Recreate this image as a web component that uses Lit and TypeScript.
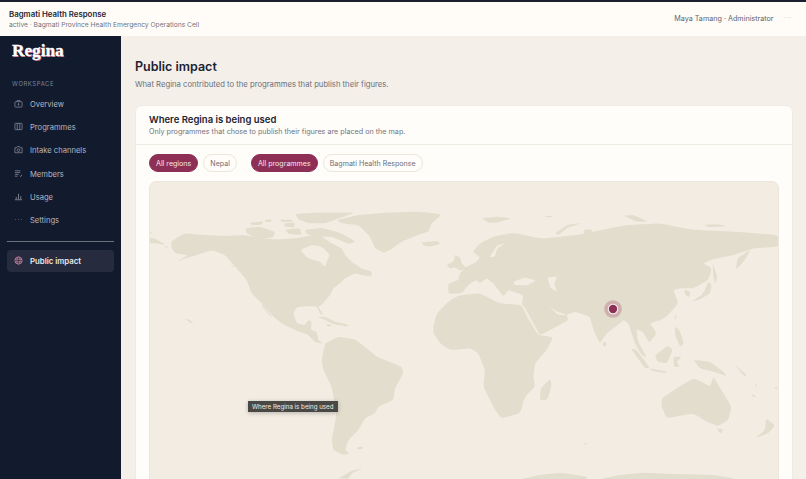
import { LitElement, html, css, svg } from "lit";
import { customElement } from "lit/decorators.js";

const LAND_LEFT = [
  "M78,185 L100,170 L120,160 L180,165 L250,168 L300,165 L350,175 L400,178 L450,175 L505,165 L530,170 L560,190 L590,205 L600,225 L625,250 L650,265 L680,288 L650,285 L630,280 L600,295 L585,310 L565,325 L555,345 L530,375 L520,380 L535,405 L525,400 L515,380 L490,378 L455,382 L445,400 L455,430 L480,435 L490,420 L500,425 L498,450 L515,455 L520,480 L535,490 L510,487 L490,465 L450,450 L410,430 L385,410 L350,370 L320,340 L305,300 L270,260 L240,225 L200,210 L155,225 L120,235 L95,245 L130,225 L90,220 L80,205 Z",
  "M350,370 L382,412 L375,408 L352,380 Z",
  "M575,120 L640,105 L720,98 L830,95 L890,103 L860,130 L850,155 L820,165 L770,185 L735,210 L715,218 L690,205 L675,170 L640,135 L590,130 Z",
  "M830,187 L880,183 L885,192 L855,200 L835,196 Z",
  "M300,145 L345,140 L390,155 L385,172 L340,178 L305,160 Z",
  "M315,128 L355,124 L350,134 L320,136 Z",
  "M360,120 L380,118 L378,126 L362,126 Z",
  "M405,118 L445,120 L440,126 L410,126 Z",
  "M415,130 L450,128 L448,142 L420,140 Z",
  "M420,148 L465,145 L470,165 L430,162 Z",
  "M450,102 L520,97 L630,98 L590,112 L540,130 L490,130 L460,118 Z",
  "M480,150 L530,143 L590,160 L632,185 L610,192 L560,170 L510,170 L485,162 Z",
  "M500,195 L530,195 L525,205 L505,205 Z",
  "M515,410 L540,410 L570,425 L605,433 L610,438 L570,434 L540,420 Z",
  "M545,432 L560,434 L556,440 L546,438 Z",
  "M590,432 L612,436 L600,440 Z",
  "M540,490 L580,470 L630,478 L665,505 L695,530 L770,560 L775,580 L750,625 L745,660 L700,680 L690,700 L660,715 L640,750 L610,780 L600,810 L615,820 L595,825 L565,810 L560,780 L575,700 L560,620 L535,570 L530,540 Z",
  "M635,802 L655,800 L650,808 L637,807 Z",
  "M118,415 L135,420 L146,432 L133,426 Z",
  "M12,172 L35,178 L62,195 L35,190 L12,190 Z",
  "M55,198 L70,200 L65,204 Z",
  "M255,248 L270,262 L265,262 Z",
  "M12,156 L24,158 L14,162 Z",
  "M580,895 L620,872 L655,865 L620,880 L610,897 Z",
  "M650,265 L680,275 L680,290 L655,285 Z",
  "M905,255 L925,245 L930,225 L945,232 L950,250 L965,265 L945,272 L930,262 L915,265 Z",
];
const LAND_RIGHT = [
  "M-80,440 L-70,400 L-30,360 L0,345 L60,340 L100,360 L120,370 L185,375 L200,410 L235,465 L280,472 L260,510 L225,550 L220,590 L225,620 L195,650 L180,700 L125,715 L105,690 L70,620 L75,570 L55,520 L30,505 L-30,510 L-60,490 L-80,460 Z",
  "M-35,342 L-35,310 L-5,300 L0,280 L20,260 L50,245 L60,232 L38,215 L60,190 L100,170 L160,158 L225,172 L250,175 L350,165 L400,155 L500,135 L600,130 L700,150 L820,155 L955,165 L955,200 L880,205 L820,225 L750,240 L730,250 L755,265 L745,300 L700,325 L660,325 L640,330 L655,370 L620,410 L590,425 L570,430 L590,460 L568,488 L548,455 L530,448 L532,480 L560,532 L545,525 L525,490 L518,470 L505,430 L490,420 L480,430 L440,460 L420,490 L400,450 L390,410 L345,395 L320,405 L325,420 L280,445 L240,465 L215,430 L185,375 L190,345 L145,330 L130,350 L100,310 L80,295 L60,310 L50,300 L30,310 L5,340 Z",
  "M240,660 L242,625 L270,597 L275,615 L262,660 Z",
  "M430,484 L440,490 L436,500 L429,498 Z",
  "M695,365 L725,345 L735,330 L745,305 L755,315 L750,340 L720,358 Z",
  "M758,250 L772,290 L765,312 L760,285 Z",
  "M828,265 L832,235 L872,208 L858,235 L835,262 Z",
  "M672,328 L690,335 L688,352 L676,345 Z",
  "M642,418 L650,400 L648,415 Z",
  "M645,440 L658,450 L672,490 L660,500 L645,465 Z",
  "M585,525 L625,497 L638,510 L620,550 L592,545 Z",
  "M512,505 L530,510 L570,565 L555,565 Z",
  "M570,565 L620,575 L618,580 L575,572 Z",
  "M640,530 L665,530 L650,545 L660,560 L642,560 Z",
  "M700,540 L750,545 L790,575 L800,588 L760,575 L720,565 Z",
  "M605,655 L650,625 L700,595 L725,605 L750,620 L760,590 L790,640 L815,680 L805,720 L775,738 L740,725 L700,700 L620,715 L605,680 Z",
  "M770,745 L790,748 L782,762 Z",
  "M885,775 L915,750 L918,715 L945,735 L925,760 Z",
  "M285,160 L320,135 L370,128 L325,142 L295,165 Z",
  "M65,115 L110,110 L155,115 L110,128 L85,128 Z",
  "M250,108 L282,108 L268,113 Z",
  "M490,107 L520,105 L565,125 L530,125 Z",
  "M730,135 L775,133 L800,138 L750,142 Z",
  "M370,150 L395,148 L400,180 L375,175 Z",
  "M820,550 L860,585 L855,590 Z",
  "M875,640 L888,650 L880,652 Z",
  "M885,608 L892,620 L887,620 Z",
  "M942,625 L956,618 L948,628 Z",
  "M372,788 L382,790 L376,794 Z",
  "M185,897 L240,885 L300,878 L380,890 L380,899 L185,899 Z",
  "M420,897 L480,885 L550,878 L640,882 L760,885 L835,897 L420,899 Z",
];
const SEA_RIGHT = [
  "M88,232 L112,195 L135,190 L112,205 L105,230 Z",
  "M160,305 L195,292 L228,302 L200,316 L165,316 Z",
  "M262,292 L292,290 L282,310 L292,335 L272,325 Z",
  "M265,378 L290,395 L322,405 L295,405 Z",
  "M185,375 L192,378 L238,462 L232,462 Z",
  "M60,320 L80,305 L75,330 Z",
  "M575,430 L595,420 L590,435 Z",
];
const SEA_LEFT = [
  "M465,210 L500,195 L530,200 L555,225 L545,245 L540,260 L525,245 L490,235 Z",
];

/* Rounds each polygon corner so traced coasts read as organic outlines. */
function smooth(d: string): string {
  const n = d.match(/-?\d+(\.\d+)?/g)!.map(Number);
  const p: [number, number][] = [];
  for (let i = 0; i + 1 < n.length; i += 2) p.push([n[i], n[i + 1]]);
  const L = p.length;
  const mix = (a: [number, number], b: [number, number], t: number) =>
    `${(a[0] + (b[0] - a[0]) * t).toFixed(1)},${(a[1] + (b[1] - a[1]) * t).toFixed(1)}`;
  let out = `M${mix(p[L - 1], p[0], 0.8)}`;
  for (let i = 0; i < L; i++) {
    const cur = p[i];
    const next = p[(i + 1) % L];
    out += ` Q${cur[0]},${cur[1]} ${mix(cur, next, 0.2)} L${mix(cur, next, 0.8)}`;
  }
  return out + " Z";
}

@customElement("app-root")
export class AppRoot extends LitElement {
  static styles = css`
    :host { display: block; width: 806px; height: 479px; overflow: hidden; font-family: Inter, "Noto Sans", sans-serif; background: #f4f0e9; color: #1c2233; }
    * { box-sizing: border-box; }
    .top { height: 36px; border-top: 2px solid #1a2030; background: #fffcf8; display: flex; align-items: center; justify-content: space-between; padding: 0 14px 0 9px; }
    .top-title { font-size: 7.85px; font-weight: 600; color: #1e2434; line-height: 11px; }
    .top-sub { font-size: 6.7px; color: #6f7480; line-height: 10px; }
    .top-right { display: flex; align-items: center; gap: 10px; font-size: 7.2px; color: #5e6370; margin-top: -1px; }
    .dots { color: #d5d2cb; font-size: 8px; letter-spacing: .5px; margin-top: -3px; }
    .body { display: flex; height: 443px; }
    .side { width: 121px; flex: none; background: #121a2e; padding: 5px 7px 0; }
    .logo { font-family: "Liberation Serif", serif; font-weight: 700; font-size: 17.2px; line-height: 20px; color: #fff; padding-left: 5px; text-shadow: .8px 1px 0 #b4607a; -webkit-text-stroke: .3px #fff; }
    .section { font-size: 5.9px; letter-spacing: .1em; color: #7f8594; padding-left: 5px; margin-top: 18px; line-height: 10px; }
    .nav { display: flex; flex-direction: column; margin-top: 3.5px; }
    .item { height: 23.3px; display: flex; align-items: center; padding-left: 7px; gap: 7px; font-size: 7.6px; color: #b3b7c1; }
    .item svg { width: 9px; height: 9px; flex: none; margin-top: -2px; color: #8d92a0; }
    .rule { height: 1px; background: #6c7180; margin: 8.5px 0; }
    .active { height: 22px; border-radius: 4px; background: #262c3e; display: flex; align-items: center; padding-left: 7px; gap: 7px; font-size: 7.8px; font-weight: 600; color: #eceae6; }
    .active svg { width: 9px; height: 9px; flex: none; margin-top: -2px; color: #d98bab; }
    .main { flex: 1; min-width: 0; padding: 22px 13px 0 14px; overflow: hidden; }
    h1 { margin: 0; font-size: 12.5px; font-weight: 600; color: #1c2233; line-height: 17px; }
    .lede { margin: 4px 0 0; font-size: 7.7px; color: #6a6f7b; line-height: 12px; }
    .card { margin-top: 14px; background: #fffdf9; border: 1px solid #efebe3; border-radius: 7px; height: 400px; overflow: hidden; }
    .head { padding: 7px 13px 0; border-bottom: 1px solid #efebe3; height: 39px; }
    h2 { margin: 0; font-size: 9.5px; font-weight: 600; color: #1c2233; line-height: 14px; }
    .head p { margin: 0; font-size: 7.2px; color: #70747f; line-height: 10px; }
    .filters { display: flex; align-items: center; padding: 9px 13px; height: 36px; }
    .group { display: flex; gap: 5px; margin-right: 14px; }
    .chip { height: 18px; padding: 0 6px; border-radius: 9px; border: 1px solid #ece6da; background: #fffdf9; color: #6a6f7b; font-size: 7.1px; display: flex; align-items: center; white-space: nowrap; }
    .chip.on { background: #8e2f56; border-color: #8e2f56; color: #f6e8ee; }
    .map { position: relative; margin: 0 13px; height: 320px; background: #f2ece3; border: 1px solid #ece7dd; border-radius: 7px; overflow: hidden; }
    .map svg { display: block; }
    .tip { position: absolute; left: 98px; top: 219px; height: 11px; padding: 0 4px; background: #4a4844; color: #f1efe9; font-size: 6.2px; line-height: 11px; white-space: nowrap; box-shadow: 0 1px 4px rgba(0,0,0,.25); }
  `;

  private icon(kind: string) {
    const s = "currentColor";
    const parts: Record<string, unknown> = {
      overview: svg`<rect x="1" y="3" width="8" height="6" rx="1" fill="none" stroke=${s} stroke-width=".8"/><path d="M3.4 3V1.6h3.2V3M5 7.6V5M4 6l1-1 1 1" fill="none" stroke=${s} stroke-width=".7"/>`,
      programmes: svg`<rect x="1" y="1.5" width="8" height="7" rx=".6" fill="none" stroke=${s} stroke-width=".8"/><path d="M3.6 1.5v7M6.4 1.5v7" stroke=${s} stroke-width=".8"/>`,
      intake: svg`<path d="M1 3h2l.7-1.2h2.6L7 3h2v5.6H1z" fill="none" stroke=${s} stroke-width=".8"/><circle cx="5" cy="5.7" r="1.5" fill="none" stroke=${s} stroke-width=".8"/>`,
      members: svg`<path d="M1 2h6M1 4h6M1 6h4M1 8h3M6.4 7.4l1 1 1.6-2" fill="none" stroke=${s} stroke-width=".8"/>`,
      usage: svg`<path d="M1 8.6h8M2.5 8V5.4M5 8V2M7.5 8V4.4" fill="none" stroke=${s} stroke-width=".9"/>`,
      settings: svg`<circle cx="1.6" cy="5" r=".45" fill=${s}/><circle cx="5" cy="5" r=".45" fill=${s}/><circle cx="8.4" cy="5" r=".45" fill=${s}/>`,
      globe: svg`<circle cx="5" cy="5" r="4" fill="none" stroke=${s} stroke-width=".8"/><ellipse cx="5" cy="5" rx="1.8" ry="4" fill="none" stroke=${s} stroke-width=".7"/><path d="M1 3.6h8M1 6.4h8" stroke=${s} stroke-width=".7"/>`,
    };
    return html`<svg viewBox="0 0 10 10" aria-hidden="true">${parts[kind]}</svg>`;
  }

  private renderMap() {
    const land = "#e3ddcd";
    const sea = "#f2ece3";
    return html`<svg width="628" height="320" viewBox="150 182 628 320" aria-hidden="true">
      <g transform="translate(145 180) scale(.33333)">
        ${LAND_LEFT.map((d) => svg`<path d=${smooth(d)} fill=${land}/>`)}
        ${SEA_LEFT.map((d) => svg`<path d=${smooth(d)} fill=${sea}/>`)}
      </g>
      <g transform="translate(460 180) scale(.33333)">
        ${LAND_RIGHT.map((d) => svg`<path d=${smooth(d)} fill=${land}/>`)}
        ${SEA_RIGHT.map((d) => svg`<path d=${smooth(d)} fill=${sea}/>`)}
      </g>
      <circle cx="613" cy="309" r="8.8" fill="#8e2f56" fill-opacity=".25"/>
      <circle cx="613" cy="309" r="5.2" fill="#fff" fill-opacity=".85"/>
      <circle cx="613" cy="309" r="4.2" fill="#8e2f56"/>
    </svg>`;
  }

  render() {
    return html`
      <div class="top">
        <div>
          <div class="top-title">Bagmati Health Response</div>
          <div class="top-sub">active · Bagmati Province Health Emergency Operations Cell</div>
        </div>
        <div class="top-right"><span>Maya Tamang · Administrator</span><span class="dots">···</span></div>
      </div>
      <div class="body">
        <aside class="side">
          <div class="logo">Regina</div>
          <div class="section">WORKSPACE</div>
          <nav class="nav">
            <div class="item">${this.icon("overview")}Overview</div>
            <div class="item">${this.icon("programmes")}Programmes</div>
            <div class="item">${this.icon("intake")}Intake channels</div>
            <div class="item">${this.icon("members")}Members</div>
            <div class="item">${this.icon("usage")}Usage</div>
            <div class="item">${this.icon("settings")}Settings</div>
          </nav>
          <div class="rule"></div>
          <div class="active">${this.icon("globe")}Public impact</div>
        </aside>
        <main class="main">
          <h1>Public impact</h1>
          <p class="lede">What Regina contributed to the programmes that publish their figures.</p>
          <section class="card">
            <div class="head">
              <h2>Where Regina is being used</h2>
              <p>Only programmes that chose to publish their figures are placed on the map.</p>
            </div>
            <div class="filters">
              <div class="group"><span class="chip on">All regions</span><span class="chip">Nepal</span></div>
              <div class="group"><span class="chip on">All programmes</span><span class="chip">Bagmati Health Response</span></div>
            </div>
            <div class="map">
              ${this.renderMap()}
              <div class="tip">Where Regina is being used</div>
            </div>
          </section>
        </main>
      </div>
    `;
  }
}
